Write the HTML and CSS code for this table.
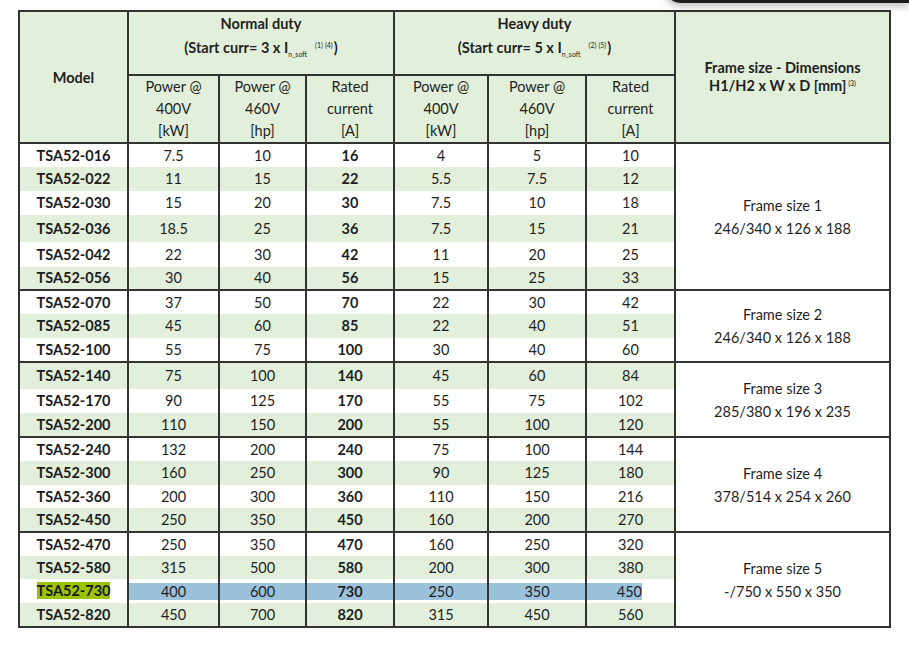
FILE: index.html
```html
<!DOCTYPE html>
<html lang="en">
<head>
<meta charset="utf-8">
<title>TSA52 ratings</title>
<link rel="stylesheet" href="styles.css">
</head>
<body>
<div class="popup"></div>
<table class="spec">
  <colgroup>
    <col class="c-model"><col class="c-p4"><col class="c-p6"><col class="c-rc">
    <col class="c-hp4"><col class="c-hp6"><col class="c-hrc"><col class="c-frame">
  </colgroup>
  <thead>
    <tr class="h1">
      <th rowspan="2" class="model-h">Model</th>
      <th colspan="3" class="duty">Normal duty<br>(Start curr= 3 x I<sub>n_soft</sub><sup class="fn">(1)<span class="gap"></span>(4)</sup>)</th>
      <th colspan="3" class="duty">Heavy duty<br>(Start curr= 5 x I<sub>n_soft</sub><sup class="fn">(2)<span class="gap"></span>(5)</sup>)</th>
      <th rowspan="2" class="frame-h">Frame size - Dimensions<br>H1/H2 x W x D [mm]&thinsp;<sup>(3)</sup></th>
    </tr>
    <tr class="h2">
      <th>Power @<br>400V<br>[kW]</th>
      <th>Power @<br>460V<br>[hp]</th>
      <th>Rated<br>current<br>[A]</th>
      <th>Power @<br>400V<br>[kW]</th>
      <th>Power @<br>460V<br>[hp]</th>
      <th>Rated<br>current<br>[A]</th>
    </tr>
  </thead>
  <tbody>
    <tr class="r24"><td class="m">TSA52-016</td><td>7.5</td><td>10</td><td class="b">16</td><td>4</td><td>5</td><td>10</td><td rowspan="6" class="frame">Frame size 1<br>246/340 x 126 x 188</td></tr>
    <tr class="r24 g"><td class="m">TSA52-022</td><td>11</td><td>15</td><td class="b">22</td><td>5.5</td><td>7.5</td><td>12</td></tr>
    <tr class="r24"><td class="m">TSA52-030</td><td>15</td><td>20</td><td class="b">30</td><td>7.5</td><td>10</td><td>18</td></tr>
    <tr class="r27 g"><td class="m">TSA52-036</td><td>18.5</td><td>25</td><td class="b">36</td><td>7.5</td><td>15</td><td>21</td></tr>
    <tr class="r25"><td class="m">TSA52-042</td><td>22</td><td>30</td><td class="b">42</td><td>11</td><td>20</td><td>25</td></tr>
    <tr class="r23 g"><td class="m">TSA52-056</td><td>30</td><td>40</td><td class="b">56</td><td>15</td><td>25</td><td>33</td></tr>
  </tbody>
  <tbody>
    <tr class="r24"><td class="m">TSA52-070</td><td>37</td><td>50</td><td class="b">70</td><td>22</td><td>30</td><td>42</td><td rowspan="3" class="frame">Frame size 2<br>246/340 x 126 x 188</td></tr>
    <tr class="r24 g"><td class="m">TSA52-085</td><td>45</td><td>60</td><td class="b">85</td><td>22</td><td>40</td><td>51</td></tr>
    <tr class="r24"><td class="m">TSA52-100</td><td>55</td><td>75</td><td class="b">100</td><td>30</td><td>40</td><td>60</td></tr>
  </tbody>
  <tbody>
    <tr class="r27 g"><td class="m">TSA52-140</td><td>75</td><td>100</td><td class="b">140</td><td>45</td><td>60</td><td>84</td><td rowspan="3" class="frame">Frame size 3<br>285/380 x 196 x 235</td></tr>
    <tr class="r24"><td class="m">TSA52-170</td><td>90</td><td>125</td><td class="b">170</td><td>55</td><td>75</td><td>102</td></tr>
    <tr class="r24 g"><td class="m">TSA52-200</td><td>110</td><td>150</td><td class="b">200</td><td>55</td><td>100</td><td>120</td></tr>
  </tbody>
  <tbody>
    <tr class="r24"><td class="m">TSA52-240</td><td>132</td><td>200</td><td class="b">240</td><td>75</td><td>100</td><td>144</td><td rowspan="4" class="frame">Frame size 4<br>378/514 x 254 x 260</td></tr>
    <tr class="r24 g"><td class="m">TSA52-300</td><td>160</td><td>250</td><td class="b">300</td><td>90</td><td>125</td><td>180</td></tr>
    <tr class="r23"><td class="m">TSA52-360</td><td>200</td><td>300</td><td class="b">360</td><td>110</td><td>150</td><td>216</td></tr>
    <tr class="r24 g"><td class="m">TSA52-450</td><td>250</td><td>350</td><td class="b">450</td><td>160</td><td>200</td><td>270</td></tr>
  </tbody>
  <tbody>
    <tr class="r24"><td class="m">TSA52-470</td><td>250</td><td>350</td><td class="b">470</td><td>160</td><td>250</td><td>320</td><td rowspan="4" class="frame">Frame size 5<br>-/750 x 550 x 350</td></tr>
    <tr class="r23 g"><td class="m">TSA52-580</td><td>315</td><td>500</td><td class="b">580</td><td>200</td><td>300</td><td>380</td></tr>
    <tr class="r24 hl"><td class="m"><span class="mark">TSA52-730</span></td><td><span class="sel">400</span></td><td><span class="sel">600</span></td><td class="b"><span class="sel">730</span></td><td><span class="sel">250</span></td><td><span class="sel">350</span></td><td><span class="sel sel-end">450</span></td></tr>
    <tr class="r24 g"><td class="m">TSA52-820</td><td>450</td><td>700</td><td class="b">820</td><td>315</td><td>450</td><td>560</td></tr>
  </tbody>
</table>
</body>
</html>
```

FILE: styles.css
```css
html, body {
  margin: 0;
  padding: 0;
  background: #ffffff;
}

body {
  padding: 10px 0 0 18px;
  font-family: "Lato", "Liberation Sans", sans-serif;
  color: #1f1f1f;
}

.popup {
  position: absolute;
  top: -12px;
  left: 666px;
  right: 0;
  height: 15px;
  background: #1d1d1d;
  border-bottom-left-radius: 14px;
  box-shadow: 0 3px 9px rgba(0, 0, 0, 0.28);
}

.spec {
  border-collapse: collapse;
  table-layout: fixed;
  width: 871px;
  border: 2px solid #333;
  font-size: 14.5px;
}

.c-model { width: 109px; }
.c-p4 { width: 91px; }
.c-p6 { width: 87px; }
.c-rc { width: 88px; }
.c-hp4 { width: 94px; }
.c-hp6 { width: 98px; }
.c-hrc { width: 89px; }
.c-frame { width: 215px; }

.spec th,
.spec td {
  padding: 0;
  text-align: center;
  border-left: 2px solid #333;
  border-right: 2px solid #333;
}

.spec thead th {
  background: #e2efda;
  vertical-align: middle;
  color: #1f1f1f;
}

.spec tbody {
  border-top: 2px solid #333;
}

.h1 { height: 64px; }
.h2 { height: 68px; }

.h1 th {
  border-bottom: 2px solid #333;
}

.model-h {
  font-weight: 700;
}

.duty {
  font-weight: 700;
  line-height: 24px;
  vertical-align: top !important;
  padding-top: 0;
}

.duty sub {
  font-size: 7px;
  font-weight: 400;
  vertical-align: -4px;
  line-height: 0;
}

.duty sup,
.frame-h sup {
  font-size: 7px;
  font-weight: 400;
  vertical-align: 5px;
  line-height: 0;
}

.fn {
  margin-left: 8px;
  margin-right: 1px;
}

.gap {
  display: inline-block;
  width: 2px;
}

.frame-h {
  font-weight: 700;
  line-height: 18px;
}

.h2 th {
  font-weight: 400;
  line-height: 22px;
}

.spec td {
  vertical-align: middle;
  line-height: 18px;
  background: #ffffff;
}

.spec tr.g td {
  background: #e2efda;
}

.spec tr.g td.frame,
.spec td.frame {
  background: #ffffff;
  line-height: 23px;
}

.r23 { height: 23px; }
.r24 { height: 24px; }
.r25 { height: 25px; }
.r27 { height: 27px; }

.m,
.b {
  font-weight: 700;
}

.m {
  color: #1c1c1c;
}

.mark {
  background: #9bc400;
  color: #1a1a1a;
}

.sel {
  display: block;
  background: #9bc1db;
  line-height: 17px;
}

.sel-end {
  width: 55px;
  text-align: right;
}
```
